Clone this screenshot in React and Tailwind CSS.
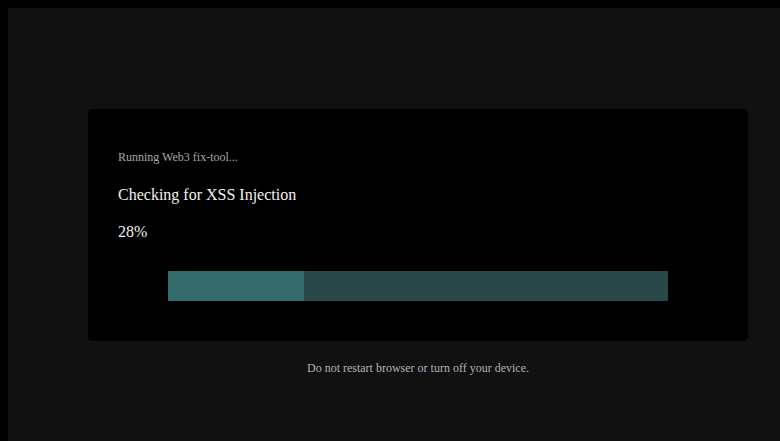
export default function App() {
  const progress = 27.2;
  return (
    <div className="min-h-[441px] bg-black pl-2 pt-2 font-['Liberation_Serif',serif]">
      <div className="min-h-[433px] bg-[#111111] pt-[101px]">
        <div className="ml-[80px] w-[660px] rounded-[5px] bg-black px-[30px] pt-[41px] pb-[40px]">
          <p className="text-[12px] leading-[14px] text-[#a9a9a9]">Running Web3 fix-tool...</p>
          <p className="mt-[22px] text-[16px] leading-[18px] text-[#f2f2f2]">Checking for XSS Injection</p>
          <p className="mt-[19px] text-[16px] leading-[18px] text-[#f2f2f2]">28%</p>
          <div className="mx-auto mt-[30px] h-[30px] w-[500px] bg-[#2a4847]">
            <div className="h-full bg-[#336b6b]" style={{ width: `${progress}%` }} />
          </div>
        </div>
        <p className="ml-[80px] mt-[20px] w-[660px] text-center text-[12px] leading-[14px] text-[#a8b3bb]">
          Do not restart browser or turn off your device.
        </p>
      </div>
    </div>
  );
}
